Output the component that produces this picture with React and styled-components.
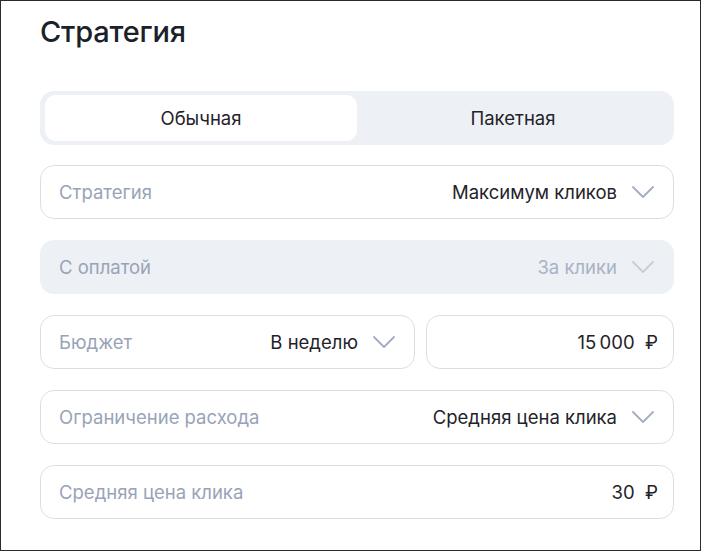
import React from "react";
import styled, { createGlobalStyle } from "styled-components";

const Global = createGlobalStyle`
  html, body { margin: 0; padding: 0; background: #fff; }
  body { font-family: Inter, "Noto Sans", sans-serif; color: #1f2329; }
  * { box-sizing: border-box; }
`;

const Frame = styled.div`
  width: 701px;
  height: 551px;
  border: 1px solid #2b2b2b;
  padding: 13px 26px 0 39px;
  display: flex;
  flex-direction: column;
`;

const Title = styled.h1`
  margin: 0;
  font-size: 29px;
  font-weight: 500;
  line-height: 36px;
  color: #1b2129;
  letter-spacing: -0.2px;
`;

const Form = styled.div`
  margin-top: 41px;
  display: flex;
  flex-direction: column;
  gap: 21px;
`;

const Tabs = styled.div`
  display: flex;
  flex: none;
  height: 54px;
  padding: 4px 5px;
  border-radius: 14px;
  background: #edf0f5;
  margin-bottom: -1px;
`;

const Tab = styled.div`
  flex: 1;
  display: flex;
  align-items: center;
  justify-content: center;
  border-radius: 11px;
  font-size: 18.5px;
  color: #1f2329;
  background: ${(p) => (p.$active ? "#fff" : "transparent")};
`;

const Row = styled.div`
  display: flex;
  flex: none;
  gap: 11px;
`;

const Field = styled.div`
  flex: ${(p) => (p.$width ? `0 0 ${p.$width}px` : p.$fill ? "1 1 0" : "none")};
  min-width: 0;
  height: 54px;
  display: flex;
  align-items: center;
  padding: 0 ${(p) => (p.$amount ? 15 : 16)}px 0 18px;
  border-radius: 14px;
  border: 1px solid ${(p) => (p.$disabled ? "transparent" : "#d9dfe9")};
  background: ${(p) => (p.$disabled ? "#edf0f5" : "#fff")};
  font-size: 18.5px;
`;

const Label = styled.span`
  color: #98a3b7;
  flex: 1;
  white-space: nowrap;
`;

const Value = styled.span`
  color: ${(p) => (p.$disabled ? "#a8b2c4" : "#1f2329")};
  white-space: nowrap;
`;

const Chevron = styled.svg`
  width: 22px;
  height: 12px;
  margin-left: 15px;
  margin-right: 3px;
  flex: none;
`;

const Caret = ({ disabled }) => (
  <Chevron viewBox="0 0 22 12" fill="none">
    <path
      d="M1 1l10 10L21 1"
      stroke={disabled ? "#c6cedb" : "#a3adc2"}
      strokeWidth="1.8"
      strokeLinecap="round"
      strokeLinejoin="round"
    />
  </Chevron>
);

const Amount = styled.span`
  margin-left: auto;
  color: #1f2329;
  white-space: nowrap;
`;

export default function App() {
  return (
    <>
      <Global />
      <Frame>
        <Title>Стратегия</Title>
        <Form>
          <Tabs>
            <Tab $active>Обычная</Tab>
            <Tab>Пакетная</Tab>
          </Tabs>
          <Field>
            <Label>Стратегия</Label>
            <Value>Максимум кликов</Value>
            <Caret />
          </Field>
          <Field $disabled>
            <Label>С оплатой</Label>
            <Value $disabled>За клики</Value>
            <Caret disabled />
          </Field>
          <Row>
            <Field $width={375}>
              <Label>Бюджет</Label>
              <Value>В неделю</Value>
              <Caret />
            </Field>
            <Field $fill $amount>
              <Amount>15&#8239;000&nbsp; ₽</Amount>
            </Field>
          </Row>
          <Field>
            <Label>Ограничение расхода</Label>
            <Value>Средняя цена клика</Value>
            <Caret />
          </Field>
          <Field $amount>
            <Label>Средняя цена клика</Label>
            <Amount>30&nbsp; ₽</Amount>
          </Field>
        </Form>
      </Frame>
    </>
  );
}
